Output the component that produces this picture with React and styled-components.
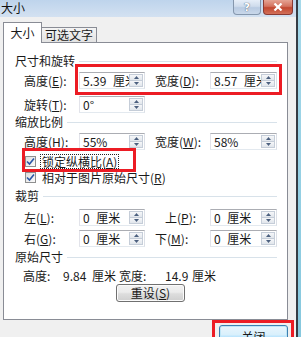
import React from 'react';
import styled, { createGlobalStyle } from 'styled-components';

const Global = createGlobalStyle`
  *, *::before, *::after { box-sizing: border-box; }
  html, body { margin: 0; padding: 0; background: #f0f0f0; overflow: hidden; }
  body {
    font-family: "Noto Sans CJK SC", "Noto Sans", sans-serif;
    font-size: 12px;
    color: #1a1a1a;
  }
`;

const Screen = styled.div`
  position: relative;
  width: 301px;
  height: 337px;
  overflow: hidden;
  display: flex;
`;

const Dialog = styled.div`
  width: 296px;
  height: 100%;
  display: flex;
  flex-direction: column;
  background: #f0f0f0;
`;

const Frame = styled.div`
  width: 5px;
  height: 100%;
  border-left: 2px solid #353c44;
  background: linear-gradient(#a6d9ea, #86c8de);
`;

const TitleBar = styled.div`
  height: 17px;
  flex: none;
  display: flex;
  justify-content: space-between;
  align-items: flex-start;
  padding: 0 3px 0 1px;
  background: linear-gradient(#bed4ec, #d3e1f1);
`;

const Title = styled.div`
  line-height: 16px;
  font-size: 12px;
  color: #111;
`;

const Caption = styled.div`
  display: flex;
  gap: 2px;
`;

const CapBtn = styled.div`
  width: ${p => p.$w}px;
  height: 15px;
  border: 1px solid ${p => (p.$close ? '#8a3a32' : '#8597ad')};
  border-top: none;
  border-radius: 0 0 4px 4px;
  display: flex;
  align-items: center;
  justify-content: center;
  background: ${p =>
    p.$close
      ? 'linear-gradient(#e5a393 0%, #d4735f 45%, #c2472f 55%, #d2705a 100%)'
      : 'linear-gradient(#e6eef8 0%, #cfdcec 45%, #b9cbe2 55%, #c9d8ea 100%)'};
  color: #fff;
  font-family: "DejaVu Sans", sans-serif;
  font-weight: bold;
  font-size: 11px;
  line-height: 1;
  text-shadow: 0 0 1px #56667a, 0 0 1px #56667a;
`;

const Body = styled.div`
  flex: 1;
  display: flex;
  flex-direction: column;
  padding: 6px 8px 0 3px;
`;

const Tabs = styled.div`
  display: flex;
  align-items: flex-end;
  height: 20px;
  margin-bottom: -1px;
  position: relative;
  z-index: 1;
`;

const Tab = styled.div`
  width: ${p => p.$w}px;
  height: ${p => (p.$active ? 21 : 16)}px;
  margin-left: ${p => (p.$active ? 0 : -1)}px;
  border: 1px solid #898c95;
  border-bottom: ${p => (p.$active ? 'none' : '1px solid #898c95')};
  background: ${p => (p.$active ? '#fff' : 'linear-gradient(#f4f4f4, #e3e3e3)')};
  display: flex;
  align-items: center;
  justify-content: center;
  line-height: 14px;
  padding-bottom: ${p => (p.$active ? 1 : 0)}px;
`;

const Panel = styled.div`
  height: 278px;
  flex: none;
  border: 1px solid #898c95;
  background: #fff;
  display: flex;
  flex-direction: column;
  padding-top: 11px;
`;

const Heading = styled.div`
  display: flex;
  align-items: center;
  gap: 4px;
  height: 14px;
  line-height: 14px;
  padding: 0 10px 0 11px;
  margin-top: ${p => p.$mt || 0}px;
  white-space: nowrap;
  &::after {
    content: '';
    flex: 1;
    height: 1px;
    background: #d8e2ea;
  }
`;

const Row = styled.div`
  display: grid;
  grid-template-columns: 55px 66px 65px 67px;
  align-items: center;
  height: 17px;
  padding-left: 20px;
  margin-top: ${p => p.$mt || 0}px;
`;

const Label = styled.div`
  white-space: nowrap;
  line-height: 14px;
  padding-left: ${p => p.$pad || 0}px;
`;

const Input = styled.div`
  height: 17px;
  display: flex;
  border: 1px solid;
  border-color: #abadb3 #dbdfe6 #e3e9ef #e2e3ea;
  background: #fff;
  overflow: hidden;
`;

const InputText = styled.div`
  flex: 1;
  min-width: 0;
  padding-left: 3px;
  line-height: 15px;
  white-space: nowrap;
  word-spacing: 4px;
  overflow: hidden;
`;

const Spin = styled.div`
  width: 15px;
  flex: none;
  display: flex;
  flex-direction: column;
  padding: 1px 1px 1px 0;
`;

const SpinHalf = styled.div`
  flex: 1;
  display: flex;
  align-items: center;
  justify-content: center;
  border: 1px solid #c5cdd8;
  background: linear-gradient(#f6f7f9, #e1e6ec);
  & + & { border-top: none; }
`;

const CheckRow = styled.div`
  display: flex;
  align-items: center;
  height: 14px;
  padding-left: 21px;
  gap: 5px;
  margin-top: ${p => p.$mt || 0}px;
`;

const Box = styled.div`
  width: 11px;
  height: 11px;
  border: 1px solid #8e8f8f;
  background: linear-gradient(135deg, #dedede, #fbfbfb);
  display: flex;
  align-items: center;
  justify-content: center;
`;

const CheckText = styled.div`
  line-height: 13px;
  padding: 0 1px;
  white-space: nowrap;
  outline: ${p => (p.$focus ? '1px dotted #222' : 'none')};
`;

const InfoRow = styled.div`
  display: grid;
  grid-template-columns: 40px 29px 27px 46px 27px auto;
  height: 14px;
  line-height: 14px;
  padding-left: 19px;
  margin-top: ${p => p.$mt || 0}px;
  white-space: nowrap;
`;

const Button = styled.div`
  width: 69px;
  height: 18px;
  border: 1px solid #707070;
  border-radius: 3px;
  background: linear-gradient(#f2f2f2 0%, #ebebeb 45%, #dddddd 55%, #cfcfcf 100%);
  box-shadow: inset 0 0 0 1px #fbfbfb;
  display: flex;
  align-items: center;
  justify-content: center;
  line-height: 14px;
  margin-left: ${p => p.$ml || 0}px;
  margin-top: ${p => p.$mt || 0}px;
`;

const Footer = styled.div`
  display: flex;
  justify-content: flex-end;
  padding-top: 5px;
`;

const DefaultButton = styled(Button)`
  height: 21px;
  border-color: #3c7fb1;
  box-shadow: inset 0 0 0 1px #bfe6f7;
  background: linear-gradient(#eaf6fd 0%, #d9f0fc 45%, #bee6fd 55%, #a7d9f5 100%);
  align-items: flex-start;
  line-height: 16px;
  padding-top: 3px;
`;

const Mark = styled.div`
  position: absolute;
  left: ${p => p.$x}px;
  top: ${p => p.$y}px;
  width: ${p => p.$w}px;
  height: ${p => p.$h}px;
  border: 3px solid #ec1c24;
  pointer-events: none;
`;

const Arrow = ({ up }) => (
  <svg width="5" height="3" viewBox="0 0 5 3">
    <path d={up ? 'M0 3 L2.5 0 L5 3 Z' : 'M0 0 L2.5 3 L5 0 Z'} fill="#4c607f" />
  </svg>
);

const Field = ({ value }) => (
  <Input>
    <InputText>{value}</InputText>
    <Spin>
      <SpinHalf><Arrow up /></SpinHalf>
      <SpinHalf><Arrow /></SpinHalf>
    </Spin>
  </Input>
);

const Check = () => (
  <Box>
    <svg width="9" height="9" viewBox="0 0 9 9">
      <path d="M1 4.5 L3.5 7 L8 1.5" stroke="#2a56a8" strokeWidth="1.6" fill="none" />
    </svg>
  </Box>
);

const M = ({ c }) => (
  <>(<u>{c}</u>):</>
);

export default function App() {
  return (
    <>
      <Global />
      <Screen>
        <Dialog>
          <TitleBar>
            <Title>大小</Title>
            <Caption>
              <CapBtn $w={28}>?</CapBtn>
              <CapBtn $w={30} $close>
                <svg width="10" height="8" viewBox="0 0 10 8">
                  <path d="M1.5 0.5 L8.5 7.5 M8.5 0.5 L1.5 7.5" stroke="#fff" strokeWidth="2.2" />
                </svg>
              </CapBtn>
            </Caption>
          </TitleBar>
          <Body>
            <Tabs>
              <Tab $active $w={39}>大小</Tab>
              <Tab $w={56}>可选文字</Tab>
            </Tabs>
            <Panel>
              <Heading>尺寸和旋转</Heading>
              <Row $mt={4}>
                <Label>高度<M c="E" /></Label>
                <Field value="5.39 厘米" />
                <Label $pad={10}>宽度<M c="D" /></Label>
                <Field value="8.57 厘米" />
              </Row>
              <Row $mt={7}>
                <Label>旋转<M c="T" /></Label>
                <Field value="0°" />
              </Row>
              <Heading $mt={2}>缩放比例</Heading>
              <Row $mt={4}>
                <Label>高度<M c="H" /></Label>
                <Field value="55%" />
                <Label $pad={10}>宽度<M c="W" /></Label>
                <Field value="58%" />
              </Row>
              <CheckRow $mt={4}>
                <Check />
                <CheckText $focus>锁定纵横比(<u>A</u>)</CheckText>
              </CheckRow>
              <CheckRow $mt={2}>
                <Check />
                <CheckText>相对于图片原始尺寸(<u>R</u>)</CheckText>
              </CheckRow>
              <Heading $mt={5}>裁剪</Heading>
              <Row $mt={6}>
                <Label>左<M c="L" /></Label>
                <Field value="0 厘米" />
                <Label $pad={20}>上<M c="P" /></Label>
                <Field value="0 厘米" />
              </Row>
              <Row $mt={4}>
                <Label>右<M c="G" /></Label>
                <Field value="0 厘米" />
                <Label $pad={10}>下<M c="M" /></Label>
                <Field value="0 厘米" />
              </Row>
              <Heading $mt={3}>原始尺寸</Heading>
              <InfoRow $mt={5}>
                <span>高度:</span>
                <span>9.84</span>
                <span>厘米</span>
                <span>宽度:</span>
                <span>14.9</span>
                <span>厘米</span>
              </InfoRow>
              <Button $ml={112} $mt={1}>重设(<u>S</u>)</Button>
            </Panel>
            <Footer>
              <DefaultButton>关闭</DefaultButton>
            </Footer>
          </Body>
        </Dialog>
        <Frame />
        <Mark $x={75} $y={64} $w={207} $h={31} />
        <Mark $x={22} $y={148} $w={114} $h={24} />
        <Mark $x={212} $y={320} $w={82} $h={24} />
      </Screen>
    </>
  );
}
